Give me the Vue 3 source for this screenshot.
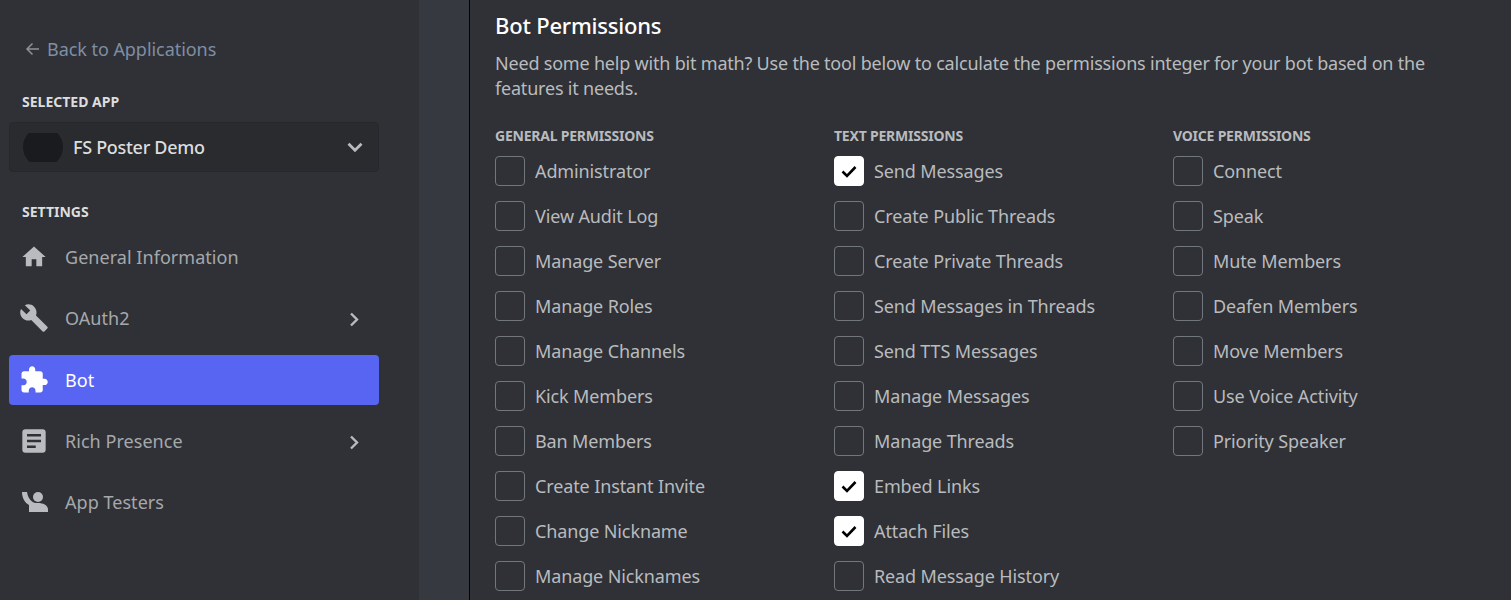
<script setup>
const nav = [
  { label: 'General Information', icon: 'home' },
  { label: 'OAuth2', icon: 'wrench', arrow: true },
  { label: 'Bot', icon: 'puzzle', active: true },
  { label: 'Rich Presence', icon: 'doc', arrow: true },
  { label: 'App Testers', icon: 'person' },
]
const groups = [
  { title: 'General Permissions', items: [
    ['Administrator'], ['View Audit Log'], ['Manage Server'], ['Manage Roles'], ['Manage Channels'],
    ['Kick Members'], ['Ban Members'], ['Create Instant Invite'], ['Change Nickname'], ['Manage Nicknames'],
  ] },
  { title: 'Text Permissions', items: [
    ['Send Messages', true], ['Create Public Threads'], ['Create Private Threads'], ['Send Messages in Threads'], ['Send TTS Messages'],
    ['Manage Messages'], ['Manage Threads'], ['Embed Links', true], ['Attach Files', true], ['Read Message History'],
  ] },
  { title: 'Voice Permissions', items: [
    ['Connect'], ['Speak'], ['Mute Members'], ['Deafen Members'], ['Move Members'], ['Use Voice Activity'], ['Priority Speaker'],
  ] },
]
</script>

<template>
  <div class="page">
    <aside class="sidebar">
      <div class="back">
        <svg class="back-icon" width="16" height="16" viewBox="0 0 16 16"><path d="M15 8H3M8.500 2.500 3 8l5.500 5.500" fill="none" stroke="currentColor" stroke-width="1.500"/></svg>
        <span>Back to Applications</span>
      </div>
      <div class="side-head first">Selected App</div>
      <div class="select">
        <div class="avatar"><div class="avatar-disc"></div></div>
        <span class="select-name">FS Poster Demo</span>
        <svg class="select-arrow" width="16" height="11" viewBox="0 0 16 11"><path d="M1.500 1.700 8 8.200l6.500-6.500" fill="none" stroke="currentColor" stroke-width="2.800"/></svg>
      </div>
      <div class="side-head second">Settings</div>
      <nav class="nav">
        <div v-for="n in nav" :key="n.label" class="nav-item" :class="{ active: n.active }">
          <span class="nav-icon">
            <svg v-if="n.icon === 'home'" width="28" height="28" viewBox="0 0 24 24"><path fill="currentColor" d="M10 20v-6h4v6h5v-8h3L12 3 2 12h3v8z"/></svg>
            <svg v-else-if="n.icon === 'wrench'" width="30" height="30" viewBox="0 0 24 24"><path fill="currentColor" d="M22.700 19l-9.100-9.100c.9-2.300.4-5-1.500-6.900-2-2-5-2.400-7.400-1.300L9 6 6 9 1.600 4.700C.4 7.100.9 10.100 2.900 12.100c1.900 1.900 4.600 2.400 6.900 1.500l9.100 9.100c.4.400 1 .4 1.400 0l2.300-2.300c.5-.4.500-1.100.1-1.400z"/></svg>
            <svg v-else-if="n.icon === 'puzzle'" width="30" height="30" viewBox="0 0 24 24"><path fill="currentColor" d="M20.500 11H19V7c0-1.100-.9-2-2-2h-4V3.500C13 2.120 11.880 1 10.500 1S8 2.120 8 3.500V5H4c-1.100 0-1.990.9-1.990 2v3.800H3.500c1.490 0 2.700 1.210 2.700 2.700s-1.210 2.700-2.700 2.700H2V20c0 1.100.9 2 2 2h3.800v-1.500c0-1.490 1.210-2.700 2.700-2.700 1.490 0 2.700 1.210 2.700 2.700V22H17c1.100 0 2-.9 2-2v-4h1.500c1.380 0 2.500-1.120 2.500-2.500S21.880 11 20.500 11z"/></svg>
            <svg v-else-if="n.icon === 'doc'" width="28" height="28" viewBox="0 0 24 24"><path fill="currentColor" fill-rule="evenodd" d="M4.600 2h14.800A2.600 2.600 0 0 1 22 4.600v14.800a2.600 2.600 0 0 1-2.600 2.600H4.600A2.600 2.600 0 0 1 2 19.400V4.600A2.600 2.600 0 0 1 4.600 2zM6 6v2.200h12V6zM6 10.900v2.200h12v-2.200zM6 15.800V18h7.500v-2.200z"/></svg>
            <svg v-else width="28" height="28" viewBox="0 0 28 28"><circle cx="18" cy="9" r="5" fill="currentColor"/><path fill="currentColor" d="M2 4h5c.5 4 2 7 5 9.500 1.500 1 3 1.500 6 1.500 5 0 9.500 2 10 6v3H9v-7C5 15 2 10 2 4z"/></svg>
          </span>
          <span class="nav-label">{{ n.label }}</span>
          <svg v-if="n.arrow" class="nav-arrow" width="11" height="15" viewBox="0 0 11 15"><path d="M2 1.500 8 7.500 2 13.500" fill="none" stroke="currentColor" stroke-width="2.400"/></svg>
        </div>
      </nav>
    </aside>
    <div class="strip"></div>
    <main class="main">
      <h2 class="title">Bot Permissions</h2>
      <p class="desc">Need some help with bit math? Use the tool below to calculate the permissions integer for your bot based on the features it needs.</p>
      <div class="cols">
        <section v-for="g in groups" :key="g.title" class="col">
          <h3 class="col-head">{{ g.title }}</h3>
          <label v-for="it in g.items" :key="it[0]" class="row">
            <span class="box" :class="{ on: it[1] }">
              <svg v-if="it[1]" width="20" height="20" viewBox="0 0 20 20"><path d="M3.500 10.500 8 15l8.500-9" fill="none" stroke="#000" stroke-width="2.600"/></svg>
            </span>
            <span class="row-label">{{ it[0] }}</span>
          </label>
        </section>
      </div>
    </main>
  </div>
</template>

<style>
html, body { background: #2f3136; overflow: hidden; }
</style>

<style scoped>
.page {
  display: flex;
  width: 1511px;
  height: 600px;
  overflow: hidden;
  background: #2f3136;
  font-family: "Noto Sans", "Open Sans", sans-serif;
}
.sidebar {
  width: 419px;
  flex: none;
  box-sizing: border-box;
  padding: 37px 40px 0 9px;
}
.back {
  display: flex;
  align-items: center;
  gap: 7px;
  height: 24px;
  padding-left: 15px;
  font-size: 18px;
  line-height: 24px;
  letter-spacing: -0.05px;
  color: #7f8ea3;
}
.back-icon { color: #8e9297; }
.side-head {
  padding-left: 13px;
  font-size: 14px;
  line-height: 18px;
  font-weight: 700;
  text-transform: uppercase;
  color: #dcddde;
}
.first { margin-top: 32px; }
.second { margin-top: 31px; }
.select {
  display: flex;
  align-items: center;
  box-sizing: border-box;
  height: 50px;
  margin-top: 11px;
  padding: 0 15px 0 13px;
  background: #292b2f;
  border: 1px solid #26282b;
  border-radius: 4px;
}
.avatar {
  width: 40px;
  height: 29px;
  overflow: hidden;
  display: flex;
  align-items: center;
  flex: none;
}
.avatar-disc {
  width: 40px;
  height: 40px;
  flex: none;
  border-radius: 50%;
  background: #1a1b1e;
}
.select-name {
  margin-left: 10px;
  flex: 1;
  font-size: 18px;
  font-weight: 500;
  letter-spacing: -0.3px;
  color: #dcddde;
}
.select-arrow { color: #b9bbbe; }
.nav { margin-top: 11px; display: flex; flex-direction: column; gap: 11.25px; }
.nav-item {
  display: flex;
  align-items: center;
  height: 50px;
  border-radius: 4px;
  color: #b9bbbe;
}
.nav-item.active { background: #5865f2; color: #fff; }
.nav-icon {
  width: 30px;
  margin-left: 10px;
  display: flex;
  justify-content: center;
  flex: none;
}
.nav-label {
  margin-left: 16px;
  flex: 1;
  font-size: 18px;
  letter-spacing: 0.04px;
  color: #a6a8ac;
}
.active .nav-label { color: #fff; }
.nav-arrow { margin-right: 19px; margin-top: 3px; color: #b9bbbe; }
.strip {
  width: 50px;
  flex: none;
  background: #36393f;
  border-right: 1px solid #040405;
}
.main {
  flex: 1;
  padding: 11px 0 0 25px;
  min-width: 0;
}
.title {
  margin: 0;
  font-size: 22px;
  line-height: 28px;
  font-weight: 500;
  letter-spacing: -0.2px;
  color: #fff;
}
.desc {
  margin: 12px 0 0;
  width: 940px;
  font-size: 18px;
  line-height: 25px;
  letter-spacing: -0.2px;
  color: #b9bbbe;
}
.cols {
  display: flex;
  margin-top: 26px;
}
.col { width: 339px; flex: none; }
.col-head {
  margin: 0 0 11px;
  font-size: 14px;
  line-height: 18px;
  font-weight: 700;
  letter-spacing: -0.22px;
  text-transform: uppercase;
  color: #b9bbbe;
}
.row {
  display: flex;
  align-items: center;
  height: 30px;
  margin-bottom: 15px;
}
.box {
  box-sizing: border-box;
  width: 30px;
  height: 30px;
  flex: none;
  display: flex;
  align-items: center;
  justify-content: center;
  border: 1px solid #72767d;
  border-radius: 4px;
}
.box.on { background: #fff; border-color: #fff; }
.row-label {
  margin-left: 10px;
  font-size: 18px;
  letter-spacing: -0.12px;
  color: #b9bbbe;
}
</style>
